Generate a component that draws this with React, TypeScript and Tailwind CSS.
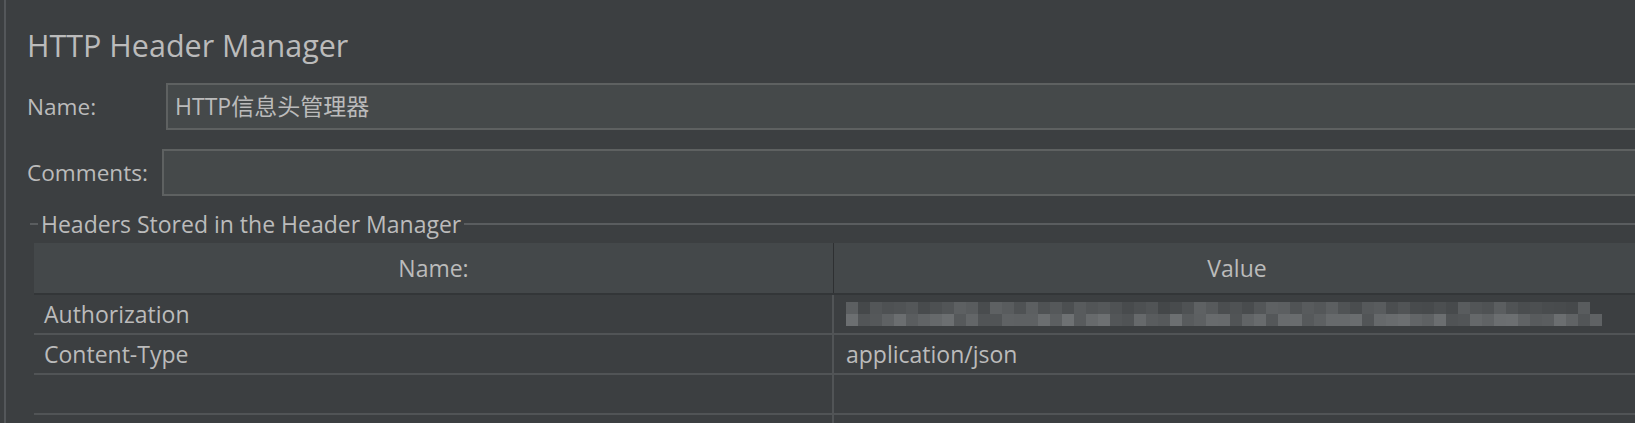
import React from 'react'

const font = { fontFamily: '"Open Sans", "Noto Sans CJK SC", sans-serif' }

// redacted token cells, two rows of 12px squares
function shade(seed: number, base: number, spread: number) {
  const x = Math.sin(seed * 12.9898) * 43758.5453
  const v = Math.round(base + (x - Math.floor(x)) * spread)
  return `rgb(${v},${v + 3},${v + 5})`
}

const topRow = Array.from({ length: 62 }, (_, i) => shade(i + 1, 68, 26))
const bottomRow = Array.from({ length: 63 }, (_, i) => shade(i + 101, 80, 30))

function Masked() {
  return (
    <div className="flex flex-col">
      <div className="flex">
        {topRow.map((c, i) => (
          <span key={i} className="h-[12px] w-[12px]" style={{ backgroundColor: c }} />
        ))}
      </div>
      <div className="flex">
        {bottomRow.map((c, i) => (
          <span key={i} className="h-[12px] w-[12px]" style={{ backgroundColor: c }} />
        ))}
      </div>
    </div>
  )
}

function Field({ label, labelWidth, value }: { label: string; labelWidth: string; value?: string }) {
  return (
    <div className="flex items-center">
      <div className={`${labelWidth} shrink-0 text-[22.6px] text-[#bbbbbb]`}>{label}</div>
      <div className="flex h-[47px] flex-1 items-center border-2 border-r-0 border-[#5e6161] bg-[#45494a] pl-[7px] text-[23px] text-[#bbbbbb]">
        {value}
      </div>
    </div>
  )
}

const rows = [
  { name: 'Authorization', value: null },
  { name: 'Content-Type', value: 'application/json' },
  { name: '', value: '' },
  { name: '', value: '' },
]

export default function App() {
  return (
    <div className="h-[423px] w-full overflow-hidden bg-[#3c3f41] pl-1" style={font}>
      <div className="h-full border-l-2 border-[#54575a] pl-[21px]">
        <h1 className="pt-[25px] text-[30.5px] leading-[40px] text-[#bbbbbb]">HTTP Header Manager</h1>

        <div className="mt-[18px] flex flex-col gap-[19px]">
          <Field label="Name:" labelWidth="w-[139px]" value="HTTP信息头管理器" />
          <Field label="Comments:" labelWidth="w-[135px]" />
        </div>

        <div className="ml-[3px] mt-[13px] flex h-[30px] items-center">
          <div className="h-[2px] w-[8px] bg-[#5a5d5f]" />
          <span className="px-[3px] text-[23px] leading-[30px] text-[#bbbbbb]">Headers Stored in the Header Manager</span>
          <div className="h-[2px] flex-1 bg-[#5a5d5f]" />
        </div>

        <div className="ml-[7px] mt-[4px] w-[1606px]">
          <div className="grid h-[52px] grid-cols-[800px_806px] border-b-2 border-[#333638] bg-[#44484a] text-[23px] text-[#bbbbbb]">
            <div className="flex items-center justify-center border-r border-[#2e3032]">Name:</div>
            <div className="flex items-center justify-center">Value</div>
          </div>
          {rows.map((r, i) => (
            <div key={i} className="grid h-[40px] grid-cols-[800px_806px] border-b-2 border-[#515456] text-[23px] text-[#bbbbbb]">
              <div className="flex items-center border-r-2 border-[#515456] pl-[10px]">{r.name}</div>
              <div className="flex items-center pl-[12px]">
                {r.value === null ? <Masked /> : r.value}
              </div>
            </div>
          ))}
        </div>
      </div>
    </div>
  )
}
